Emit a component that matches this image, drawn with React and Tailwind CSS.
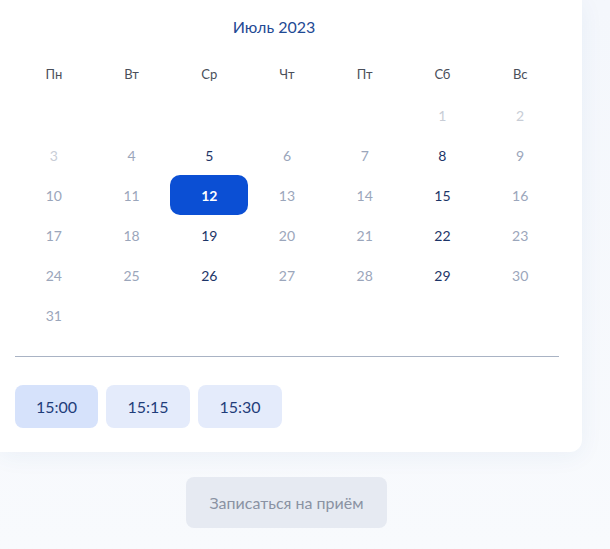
// Календарь записи на приём
const WEEKDAYS = ['Пн', 'Вт', 'Ср', 'Чт', 'Пт', 'Сб', 'Вс'];

// state: past — бледный, off — недоступный, on — доступный, sel — выбран
const days = [
  null, null, null, null, null,
  { d: 1, s: 'past' }, { d: 2, s: 'past' },
  { d: 3, s: 'past' }, { d: 4, s: 'off' }, { d: 5, s: 'on' }, { d: 6, s: 'off' }, { d: 7, s: 'off' }, { d: 8, s: 'on' }, { d: 9, s: 'off' },
  { d: 10, s: 'off' }, { d: 11, s: 'off' }, { d: 12, s: 'sel' }, { d: 13, s: 'off' }, { d: 14, s: 'off' }, { d: 15, s: 'on' }, { d: 16, s: 'off' },
  { d: 17, s: 'off' }, { d: 18, s: 'off' }, { d: 19, s: 'on' }, { d: 20, s: 'off' }, { d: 21, s: 'off' }, { d: 22, s: 'on' }, { d: 23, s: 'off' },
  { d: 24, s: 'off' }, { d: 25, s: 'off' }, { d: 26, s: 'on' }, { d: 27, s: 'off' }, { d: 28, s: 'off' }, { d: 29, s: 'on' }, { d: 30, s: 'off' },
  { d: 31, s: 'off' },
];

const dayClass = {
  past: 'text-[#c8cdd6]',
  off: 'text-[#9ba6bb]',
  on: 'text-[#1d3568]',
  sel: 'bg-[#0b4fd4] text-white font-bold rounded-[10px]',
};

const times = ['15:00', '15:15', '15:30'];

export default function App() {
  return (
    <div
      className="w-full h-[549px] bg-gradient-to-b from-[#f4f7fc] to-[#f8fafd] overflow-hidden"
      style={{ fontFamily: 'Lato, "Open Sans", sans-serif' }}
    >
      {/* Карточка календаря */}
      <div className="w-[582px] bg-white rounded-br-[12px] shadow-[0_4px_24px_rgba(40,80,160,0.06)] pt-[15px] pb-[24px] pl-[14px] pr-[24px]">
        <div className="mr-[24px] text-center text-[16px] leading-[24px] text-[#1f4a94]">Июль 2023</div>

        <div className="mt-[16px] ml-[1px] grid grid-cols-7 w-[544px]">
          {WEEKDAYS.map(w => (
            <div key={w} className="h-[40px] flex items-center justify-center text-[13px] text-[#4a4f5a]">{w}</div>
          ))}
          {days.map((c, i) => (
            <div key={i} className="h-[40px] flex items-center justify-center">
              {c && (
                <div className={`w-[78px] h-[40px] flex items-center justify-center text-[14px] ${dayClass[c.s]}`}>
                  {c.d}
                </div>
              )}
            </div>
          ))}
        </div>

        <div className="mt-[21px] ml-[1px] w-[544px] h-px bg-[#a9b3c4]" />

        <div className="mt-[28px] ml-[1px] flex gap-[8px]">
          {times.map((t, i) => (
            <button
              key={t}
              className={`h-[43px] rounded-[8px] text-[16px] text-[#1f3d7a] ${i === 0 ? 'w-[83px] bg-[#d6e2fb]' : 'w-[84px] bg-[#e4ebfb]'}`}
            >
              {t}
            </button>
          ))}
        </div>
      </div>

      <button className="mt-[25px] ml-[186px] w-[201px] h-[51px] rounded-[8px] bg-[#e6eaf2] text-[16px] text-[#8a92a3]">
        Записаться на приём
      </button>
    </div>
  );
}
